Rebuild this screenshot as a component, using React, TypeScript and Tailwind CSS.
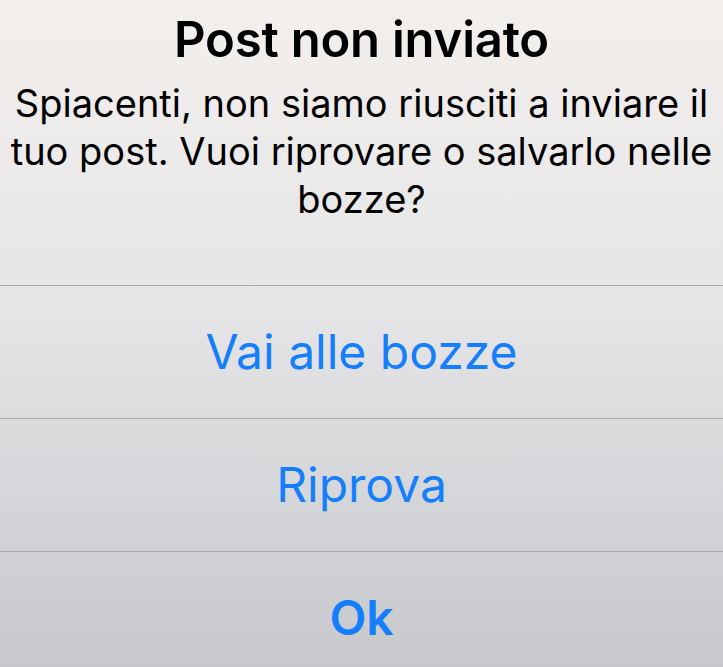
export default function App() {
  const actions = [
    { label: "Vai alle bozze", bold: false },
    { label: "Riprova", bold: false },
    { label: "Ok", bold: true },
  ];

  return (
    <div
      className="w-[723px] h-[667px] overflow-hidden flex flex-col bg-gradient-to-b from-[#f3efec] via-[#e6e6e8] via-45% to-[#c7c8cc]"
      style={{ fontFamily: "Inter, 'Noto Sans', sans-serif" }}
    >
      {/* Header */}
      <div className="h-[285px] shrink-0 flex flex-col items-center pt-[11px] px-1 text-center text-black">
        <h1 className="text-[49px] leading-[58px] font-semibold tracking-[-0.2px]">Post non inviato</h1>
        <p className="mt-[10px] text-[38px] leading-[48px]">
          Spiacenti, non siamo riusciti a inviare il tuo post. Vuoi riprovare o salvarlo nelle bozze?
        </p>
      </div>

      {/* Actions */}
      {actions.map((action) => (
        <button
          key={action.label}
          className={
            "h-[133px] shrink-0 border-t border-[#a9a9ac] flex items-center justify-center text-[48px] text-[#157efb] " +
            (action.bold ? "font-semibold" : "font-normal")
          }
        >
          {action.label}
        </button>
      ))}
    </div>
  );
}
